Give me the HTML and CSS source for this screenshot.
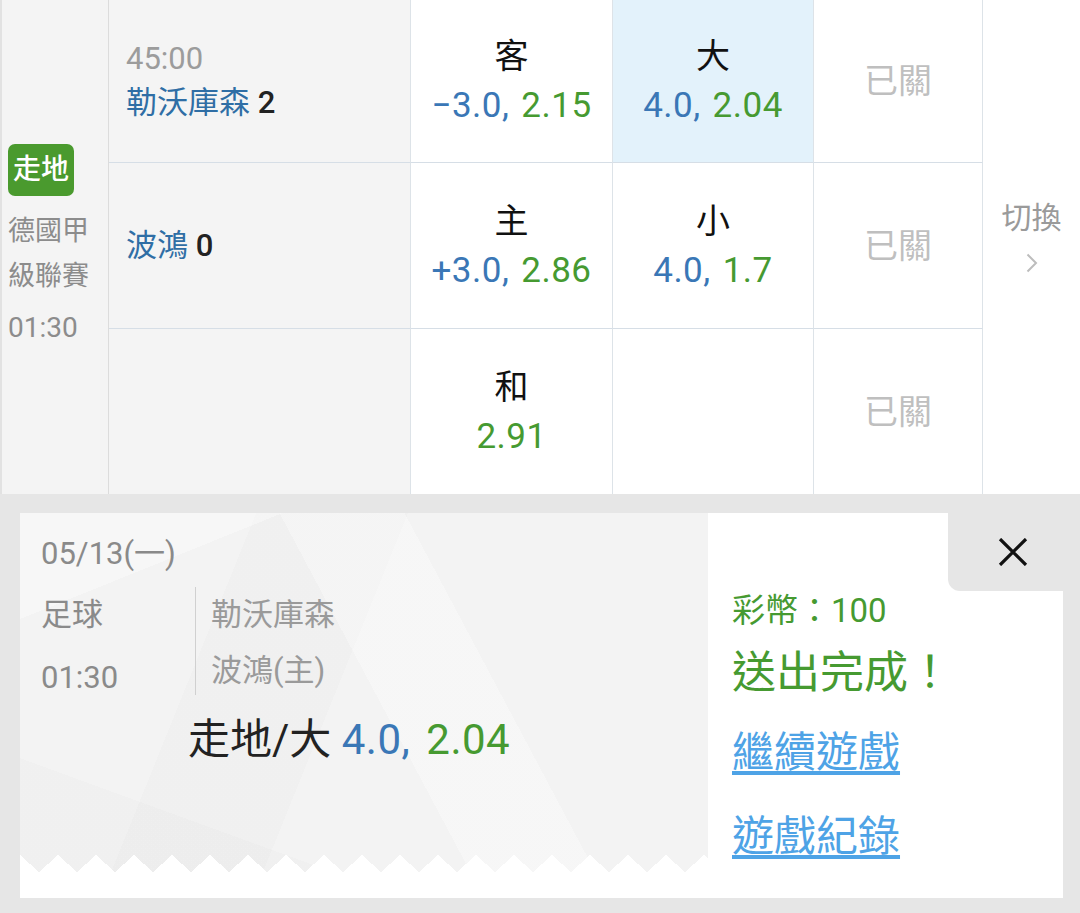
FILE: index.html
```html
<!DOCTYPE html>
<html lang="zh-Hant">

<head>
    <meta charset="UTF-8">
    <meta name="viewport" content="width=device-width, initial-scale=1.0">
    <title>走地 - 投注完成</title>
    <link rel="stylesheet" href="styles.css">
</head>

<body>
    <!-- 賽事賠率表 -->
    <div class="board">
        <div class="league">
            <span class="live-tag">走地</span>
            <p class="league-name">德國甲<br>級聯賽</p>
            <p class="kickoff">01:30</p>
        </div>

        <div class="team">
            <p class="clock">45:00</p>
            <p><span class="team-name">勒沃庫森</span> <span class="score">2</span></p>
        </div>
        <div class="odd">
            <p class="odd-label">客</p>
            <p class="odd-value"><span class="line">−3.0,</span><span class="price">2.15</span></p>
        </div>
        <div class="odd picked">
            <p class="odd-label">大</p>
            <p class="odd-value"><span class="line">4.0,</span><span class="price">2.04</span></p>
        </div>
        <div class="odd closed">已關</div>

        <div class="switch">
            <span>切換</span>
            <svg class="chevron" width="12" height="20" viewBox="0 0 12 20">
                <polyline points="1.5,1.5 10,10 1.5,18.5" fill="none" stroke="#bdbdbd" stroke-width="2" />
            </svg>
        </div>

        <div class="team">
            <p><span class="team-name">波鴻</span> <span class="score">0</span></p>
        </div>
        <div class="odd">
            <p class="odd-label">主</p>
            <p class="odd-value"><span class="line">+3.0,</span><span class="price">2.86</span></p>
        </div>
        <div class="odd">
            <p class="odd-label">小</p>
            <p class="odd-value"><span class="line">4.0,</span><span class="price">1.7</span></p>
        </div>
        <div class="odd closed">已關</div>

        <div class="team is-last"></div>
        <div class="odd is-last">
            <p class="odd-label">和</p>
            <p class="odd-value"><span class="price">2.91</span></p>
        </div>
        <div class="odd is-last"></div>
        <div class="odd closed is-last">已關</div>
    </div>

    <!-- 投注單 -->
    <div class="result">
        <div class="ticket">
            <div class="ticket-main">
                <p class="ticket-date">05/13(一)</p>
                <div class="ticket-match">
                    <div class="match-meta">
                        <p>足球</p>
                        <p class="match-time">01:30</p>
                    </div>
                    <div class="match-teams">
                        <p>勒沃庫森</p>
                        <p>波鴻(主)</p>
                    </div>
                </div>
                <p class="ticket-bet">走地/大 <span class="line">4.0,</span><span class="price">2.04</span></p>
                <div class="tear"></div>
                <div class="ticket-foot"></div>
            </div>

            <div class="ticket-side">
                <div class="close-row">
                    <button class="close-btn" type="button">
                        <svg width="30" height="28" viewBox="0 0 30 28">
                            <path d="M2 1 L28 27 M28 1 L2 27" stroke="#111" stroke-width="3.2" fill="none" />
                        </svg>
                    </button>
                </div>
                <div class="side-body">
                    <p class="stake">彩幣：100</p>
                    <p class="done">送出完成！</p>
                    <a href="#" class="side-link first">繼續遊戲</a>
                    <a href="#" class="side-link">遊戲紀錄</a>
                </div>
            </div>
        </div>
    </div>
</body>

</html>
```

FILE: styles.css
```css
* {
    margin: 0;
    padding: 0;
    box-sizing: border-box;
}

body {
    font-family: Roboto, "Noto Sans CJK TC", sans-serif;
    background: #fff;
    color: #222;
    width: 1080px;
}

/* 賠率表 */
.board {
    display: grid;
    grid-template-columns: 109px 302px 202px 201px 169px 1fr;
    grid-template-rows: 163px 166px 165px;
}

.league {
    grid-row: span 3;
    background: #f4f4f4;
    border-left: 2px solid #e2e2e2;
    border-right: 1px solid #dcdcdc;
    padding-left: 6px;
    display: flex;
    flex-direction: column;
    justify-content: center;
    align-items: flex-start;
    font-size: 27px;
    line-height: 45px;
    color: #8c8c8c;
}

.live-tag {
    display: block;
    height: 52px;
    padding: 0 5px;
    background: #4a9a2e;
    border-radius: 7px;
    color: #fff;
    font-size: 28px;
    font-weight: 500;
    line-height: 52px;
    margin-bottom: 13px;
}

.kickoff {
    margin-top: 6px;
    font-size: 28px;
}

.team {
    background: #f4f4f4;
    border-right: 1px solid #dde3e8;
    border-bottom: 1px solid #d6dee6;
    padding-left: 17px;
    display: flex;
    flex-direction: column;
    justify-content: center;
    font-size: 31px;
    line-height: 44px;
}

.clock {
    color: #9c9c9c;
}

.team-name {
    color: #2f6ea5;
}

.score {
    color: #222;
    font-weight: 500;
}

.odd {
    background: #fff;
    border-right: 1px solid #dde3e8;
    border-bottom: 1px solid #d6dee6;
    display: flex;
    flex-direction: column;
    justify-content: center;
    align-items: center;
    font-size: 34px;
    line-height: 50px;
}

.odd.picked {
    background: #e3f2fb;
}

.odd.closed {
    color: #bfbfbf;
}

.odd-label {
    color: #111;
}

.odd-value {
    font-size: 35px;
    letter-spacing: 0.5px;
}

.board .is-last {
    border-bottom: none;
}

.line {
    color: #3a77b6;
    margin-right: 12px;
}

.price {
    color: #469a31;
}

.switch {
    grid-row: span 3;
    display: flex;
    flex-direction: column;
    align-items: center;
    justify-content: center;
    padding-bottom: 26px;
    color: #9a9a9a;
    font-size: 30px;
    line-height: 46px;
}

.chevron {
    margin-top: 12px;
}

/* 投注單 */
.result {
    background: #e6e6e6;
    padding: 19px 17px 15px 20px;
}

.ticket {
    display: flex;
    height: 385px;
}

.ticket-main {
    width: 688px;
    display: flex;
    flex-direction: column;
    background:
        linear-gradient(158deg, rgba(255, 255, 255, 0.35) 0 16%, transparent 16%),
        linear-gradient(62deg, transparent 52%, rgba(255, 255, 255, 0.3) 52% 66%, transparent 66%),
        linear-gradient(112deg, transparent 28%, rgba(0, 0, 0, 0.012) 28% 46%, transparent 46%),
        linear-gradient(20deg, rgba(0, 0, 0, 0.01) 0 22%, transparent 22%),
        #f3f3f3;
}

.ticket-date {
    padding: 21px 0 0 21px;
    font-size: 31px;
    line-height: 40px;
    color: #8a8a8a;
}

.ticket-match {
    display: flex;
    height: 108px;
    margin: 13px 0 0 21px;
    font-size: 31px;
    color: #8a8a8a;
}

.match-meta {
    width: 154px;
    line-height: 56px;
}

.match-time {
    margin-top: 7px;
}

.match-teams {
    border-left: 1px solid #d0d0d0;
    padding-left: 15px;
    line-height: 56px;
    color: #9a9a9a;
}

.ticket-bet {
    padding: 20px 0 0 168px;
    font-size: 42px;
    line-height: 50px;
    color: #222;
}

.ticket-bet .line,
.ticket-bet .price {
    letter-spacing: 0.5px;
}

.ticket-bet .line {
    margin-right: 16px;
}

.tear {
    margin-top: auto;
    height: 17px;
    background: conic-gradient(from -48.2deg at 50% 100%, transparent 96.4deg, #fff 0) 0 0 / 38px 17px repeat-x;
}

.ticket-foot {
    height: 26px;
    background: #fff;
}

.ticket-side {
    flex: 1;
    background: #fff;
    display: flex;
    flex-direction: column;
}

.close-row {
    display: flex;
    justify-content: flex-end;
}

.close-btn {
    width: 115px;
    height: 78px;
    background: #e6e6e6;
    border: none;
    border-bottom-left-radius: 12px;
    padding-left: 15px;
    display: flex;
    align-items: center;
    justify-content: center;
    cursor: pointer;
}

.side-body {
    padding-left: 24px;
    color: #469a31;
}

.stake {
    font-size: 33px;
    line-height: 40px;
}

.done {
    margin-top: 14px;
    font-size: 44px;
    line-height: 56px;
}

.side-link {
    display: block;
    margin-top: 32px;
    font-size: 42px;
    line-height: 52px;
    color: #4ea3e6;
    text-decoration: underline;
    text-underline-offset: 4px;
}

.side-link.first {
    margin-top: 26px;
}
```
